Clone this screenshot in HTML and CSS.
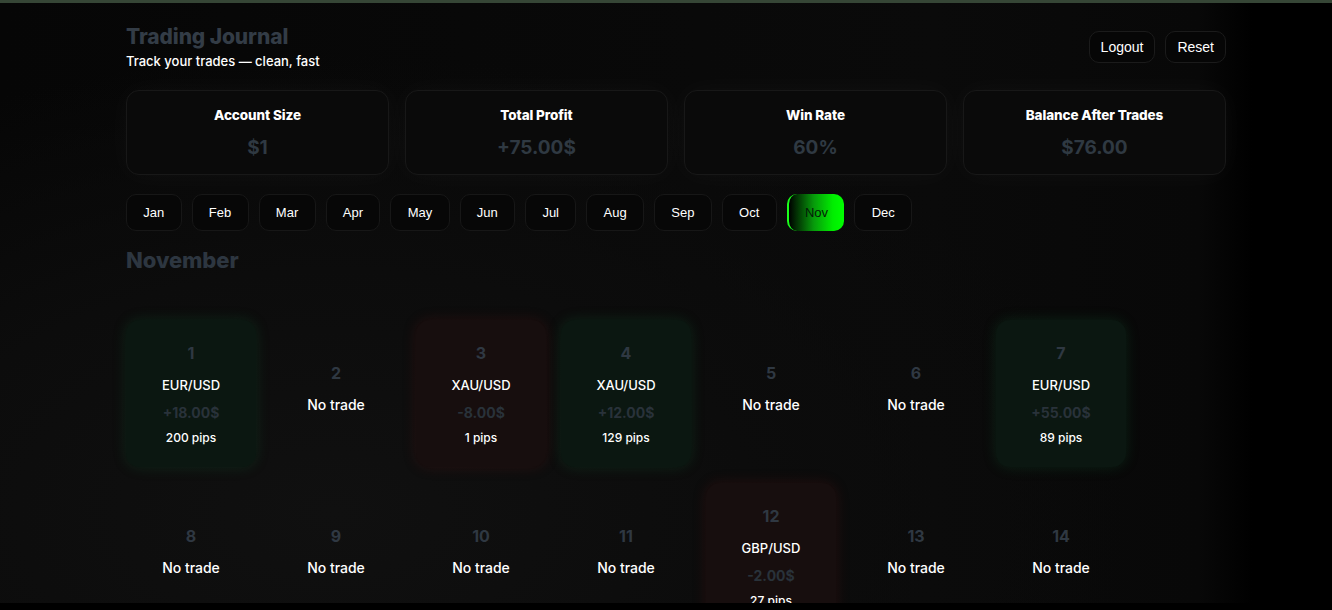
FILE: index.html
```html
<!DOCTYPE html>
<html lang="en">
<head>
    <meta charset="UTF-8">
    <meta name="viewport" content="width=device-width, initial-scale=1.0">
    <title>Trading Journal</title>
    <link rel="stylesheet" href="styles.css">
</head>
<body>
    <div class="app">
        <div class="container">
            <header class="header">
                <div>
                    <h1 class="title">Trading Journal</h1>
                    <p class="subtitle">Track your trades — clean, fast</p>
                </div>
                <div class="actions">
                    <button class="btn">Logout</button>
                    <button class="btn">Reset</button>
                </div>
            </header>

            <section class="stats">
                <div class="stat">
                    <div class="stat-label">Account Size</div>
                    <div class="stat-value">$1</div>
                </div>
                <div class="stat">
                    <div class="stat-label">Total Profit</div>
                    <div class="stat-value">+75.00$</div>
                </div>
                <div class="stat">
                    <div class="stat-label">Win Rate</div>
                    <div class="stat-value">60%</div>
                </div>
                <div class="stat">
                    <div class="stat-label">Balance After Trades</div>
                    <div class="stat-value">$76.00</div>
                </div>
            </section>

            <nav class="months">
                <button class="month">Jan</button>
                <button class="month">Feb</button>
                <button class="month">Mar</button>
                <button class="month">Apr</button>
                <button class="month">May</button>
                <button class="month">Jun</button>
                <button class="month">Jul</button>
                <button class="month">Aug</button>
                <button class="month">Sep</button>
                <button class="month">Oct</button>
                <button class="month active">Nov</button>
                <button class="month">Dec</button>
            </nav>

            <h2 class="month-title">November</h2>

            <div class="calendar">
                <div class="day win">
                    <div class="day-num">1</div>
                    <div class="pair">EUR/USD</div>
                    <div class="pnl">+18.00$</div>
                    <div class="pips">200 pips</div>
                </div>
                <div class="day">
                    <div class="day-num">2</div>
                    <div class="empty">No trade</div>
                </div>
                <div class="day loss">
                    <div class="day-num">3</div>
                    <div class="pair">XAU/USD</div>
                    <div class="pnl">-8.00$</div>
                    <div class="pips">1 pips</div>
                </div>
                <div class="day win">
                    <div class="day-num">4</div>
                    <div class="pair">XAU/USD</div>
                    <div class="pnl">+12.00$</div>
                    <div class="pips">129 pips</div>
                </div>
                <div class="day">
                    <div class="day-num">5</div>
                    <div class="empty">No trade</div>
                </div>
                <div class="day">
                    <div class="day-num">6</div>
                    <div class="empty">No trade</div>
                </div>
                <div class="day win">
                    <div class="day-num">7</div>
                    <div class="pair">EUR/USD</div>
                    <div class="pnl">+55.00$</div>
                    <div class="pips">89 pips</div>
                </div>

                <div class="day">
                    <div class="day-num">8</div>
                    <div class="empty">No trade</div>
                </div>
                <div class="day">
                    <div class="day-num">9</div>
                    <div class="empty">No trade</div>
                </div>
                <div class="day">
                    <div class="day-num">10</div>
                    <div class="empty">No trade</div>
                </div>
                <div class="day">
                    <div class="day-num">11</div>
                    <div class="empty">No trade</div>
                </div>
                <div class="day loss">
                    <div class="day-num">12</div>
                    <div class="pair">GBP/USD</div>
                    <div class="pnl">-2.00$</div>
                    <div class="pips">27 pips</div>
                </div>
                <div class="day">
                    <div class="day-num">13</div>
                    <div class="empty">No trade</div>
                </div>
                <div class="day">
                    <div class="day-num">14</div>
                    <div class="empty">No trade</div>
                </div>

                <div class="day"><div class="day-num">15</div><div class="empty">No trade</div></div>
                <div class="day"><div class="day-num">16</div><div class="empty">No trade</div></div>
                <div class="day"><div class="day-num">17</div><div class="empty">No trade</div></div>
                <div class="day"><div class="day-num">18</div><div class="empty">No trade</div></div>
                <div class="day"><div class="day-num">19</div><div class="empty">No trade</div></div>
                <div class="day"><div class="day-num">20</div><div class="empty">No trade</div></div>
                <div class="day"><div class="day-num">21</div><div class="empty">No trade</div></div>
            </div>
        </div>
    </div>
</body>
</html>
```

FILE: styles.css
```css
html {
    background: #000;
}
body {
    margin: 0;
    border-top: 3px solid #364636;
    font-family: Inter, "Noto Sans", sans-serif;
    color: #fff;
    height: 600px;
    overflow: hidden;
}
.app {
    height: 600px;
    background:
        radial-gradient(ellipse 70% 90% at 25% 85%, #101010 0%, #0c0c0c 45%, rgba(0,0,0,0) 85%),
        linear-gradient(90deg, #060606 0%, #0a0a0a 70%, #080808 90%, #000 94%);
}
.container {
    width: 1100px;
    margin: 0 auto;
    padding-top: 20px;
    position: relative;
    left: 10px;
}
.header {
    display: flex;
    justify-content: space-between;
    align-items: flex-start;
}
.title {
    margin: 0;
    font-size: 21px;
    font-weight: 800;
    line-height: 28px;
    color: #333c46;
    letter-spacing: -0.1px;
}
.subtitle {
    margin: 1px 0 0;
    font-size: 13px;
    font-weight: 500;
    line-height: 18px;
    color: #fff;
}
.actions {
    display: flex;
    gap: 10px;
    padding-top: 8px;
}
.btn {
    height: 32px;
    padding: 0 11px;
    font-family: "Liberation Sans", Arial, sans-serif;
    font-size: 14px;
    color: #fff;
    background: #060606;
    border: 1px solid #1b1b1b;
    border-radius: 10px;
    cursor: pointer;
}
.stats {
    display: grid;
    grid-template-columns: repeat(4, 1fr);
    gap: 16px;
    margin-top: 20px;
}
.stat {
    height: 85px;
    box-sizing: border-box;
    padding-top: 15px;
    text-align: center;
    background: #0a0a0a;
    border: 1px solid #181818;
    border-radius: 13px;
    box-shadow: 0 0 28px rgba(255, 255, 255, 0.035);
}
.stat-label {
    font-size: 13.5px;
    font-weight: 800;
    line-height: 18px;
    letter-spacing: -0.1px;
}
.stat-value {
    margin-top: 12px;
    font-size: 19px;
    font-weight: 700;
    line-height: 24px;
    color: #2f3942;
}
.months {
    display: flex;
    gap: 10px;
    margin-top: 19px;
}
.month {
    height: 37px;
    padding: 0 16.3px;
    font-family: "Liberation Sans", Arial, sans-serif;
    font-size: 13px;
    color: #fff;
    background: #070707;
    border: 1px solid #171717;
    border-radius: 10px;
    cursor: pointer;
}
.month.active {
    color: #051a08;
    background: linear-gradient(90deg, #000 0%, #079a0b 45%, #00ee00 80%, #00ff00 100%);
    border: none;
    border-left: 2px solid #1aff1a;
}
.month-title {
    margin: 14px 0 0;
    font-size: 22px;
    font-weight: 800;
    line-height: 30px;
    color: #2d3640;
    letter-spacing: -0.1px;
}
.calendar {
    display: grid;
    grid-template-columns: repeat(7, 130px);
    grid-auto-rows: 147px;
    gap: 16px 15px;
    margin-top: 45px;
}
.day {
    display: flex;
    flex-direction: column;
    align-items: center;
    justify-content: center;
    border-radius: 14px;
}
.day.win {
    background: #0b1711;
    box-shadow: 0 0 14px rgba(20, 120, 60, 0.22);
}
.day.loss {
    background: #170e0e;
    box-shadow: 0 0 14px rgba(120, 25, 25, 0.22);
}
.day-num {
    font-size: 16px;
    font-weight: 700;
    line-height: 24px;
    color: #2f3842;
    margin-bottom: 8px;
}
.pair {
    font-size: 13px;
    font-weight: 500;
    line-height: 24px;
}
.pnl {
    margin-top: 4px;
    font-size: 14px;
    font-weight: 700;
    line-height: 24px;
    color: #29323a;
}
.pips {
    margin-top: 4px;
    font-size: 12px;
    font-weight: 500;
    line-height: 18px;
}
.empty {
    font-size: 14px;
    font-weight: 500;
    line-height: 24px;
}
.day:not(.win):not(.loss) {
    padding-bottom: 10px;
}
```
